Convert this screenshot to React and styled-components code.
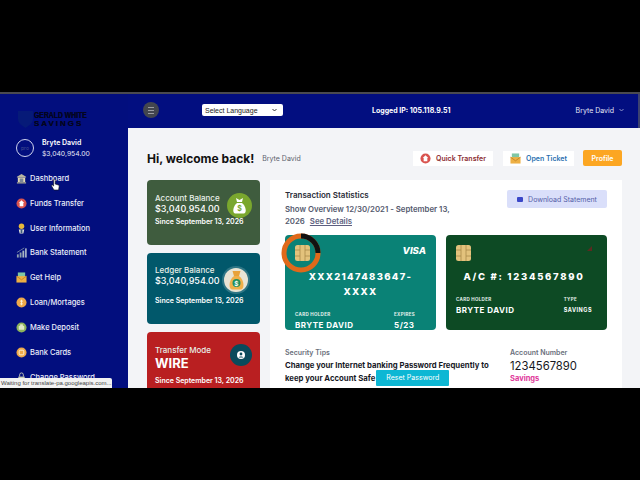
import styled, { createGlobalStyle } from "styled-components";

const GlobalStyle = createGlobalStyle`
  html, body { margin: 0; padding: 0; background: #000; }
  body { font-family: "Inter", "Liberation Sans", sans-serif; }
  * { box-sizing: border-box; }
`;

const BankIcon = () => (
  <svg width="11" height="11" viewBox="0 0 12 12">
    <path d="M6 1 L11 4 V5 H1 V4 Z" fill="#b9b6a0" />
    <rect x="2" y="5" width="8" height="5" fill="#e4d9b4" />
    <rect x="4" y="6" width="4" height="4" fill="#7a8596" />
    <rect x="1" y="10" width="10" height="1.5" fill="#9d9c90" />
  </svg>
);
const TransferIcon = () => (
  <svg width="11" height="11" viewBox="0 0 12 12">
    <circle cx="6" cy="6" r="5.5" fill="#d9534f" />
    <path d="M6 2.5 L9 5.5 H8 V9 H4 V5.5 H3 Z" fill="#fff" />
  </svg>
);
const UserIcon = () => (
  <svg width="11" height="11" viewBox="0 0 12 12">
    <circle cx="6" cy="3.5" r="3" fill="#e9b93a" />
    <path d="M3 7 H9 L8 11.5 H4 Z" fill="#e3e3da" />
    <rect x="5" y="7" width="2" height="4" fill="#3d5a80" />
  </svg>
);
const ChartIcon = () => (
  <svg width="11" height="11" viewBox="0 0 12 12">
    <rect x="1" y="8" width="2" height="3.5" fill="#8fa0ae" />
    <rect x="4" y="6" width="2" height="5.5" fill="#8fa0ae" />
    <rect x="7" y="4" width="2" height="7.5" fill="#a9b7c2" />
    <rect x="10" y="1.5" width="1.6" height="10" fill="#c2ccd4" />
    <path d="M1 6 L5 3.5 L9 1" stroke="#8fa0ae" strokeWidth="0.8" fill="none" />
  </svg>
);
const TicketIcon = ({ size = 11 }) => (
  <svg width={size} height={size} viewBox="0 0 12 12">
    <rect x="2" y="0.5" width="8" height="6" fill="#7fc6a4" />
    <rect x="0.5" y="4.5" width="11" height="7" fill="#eeb044" />
    <path d="M0.5 4.5 L6 8.5 L11.5 4.5" stroke="#b87c1e" strokeWidth="0.8" fill="none" />
  </svg>
);
const CoinIcon = () => (
  <svg width="11" height="11" viewBox="0 0 12 12">
    <circle cx="6" cy="6" r="5.5" fill="#efa94a" />
    <path d="M6 3 V9 M4.5 4.5 H7.5 M4.5 7.5 H7.5" stroke="#fff3d8" strokeWidth="1" />
  </svg>
);
const DepositIcon = () => (
  <svg width="11" height="11" viewBox="0 0 12 12">
    <circle cx="6" cy="6" r="5.5" fill="#8eb35c" />
    <rect x="3" y="4" width="6" height="4.5" rx="1" fill="#dfe8c8" />
    <rect x="4.5" y="2.5" width="3" height="2" fill="#dfe8c8" />
  </svg>
);
const CardIcon = () => (
  <svg width="11" height="11" viewBox="0 0 12 12">
    <circle cx="6" cy="6" r="5.5" fill="#efa94a" />
    <rect x="3.5" y="3.5" width="5" height="5" rx="1" fill="none" stroke="#fff3d8" strokeWidth="1" />
  </svg>
);
const LockIcon = () => (
  <svg width="11" height="11" viewBox="0 0 12 12">
    <rect x="2.5" y="5" width="7" height="6.5" fill="#c9cdb8" />
    <path d="M4 5 V3 a2 2 0 0 1 4 0 V5" stroke="#c9cdb8" fill="none" />
  </svg>
);
const Cursor = () => (
  <svg width="9" height="12" viewBox="0 0 9 12">
    <path d="M2.6 1 a.8 .8 0 0 1 1.6 0 V5 L7.4 6 a1 1 0 0 1 .8 1 L7.6 11 H3 L.6 7 a.7 .7 0 0 1 1.2 -.7 L2.6 7 Z" fill="#fff" stroke="#111" strokeWidth=".6" />
  </svg>
);
const Shield = () => (
  <svg width="15" height="18" viewBox="0 0 15 18">
    <path d="M0 1 H15 V9 C15 14 10 16 7.5 18 C5 16 0 14 0 9 Z" fill="#061a78" />
  </svg>
);
const Chip = ({ width = 15, height = 16 }) => (
  <svg width={width} height={height} viewBox="0 0 15 16">
    <rect width="15" height="16" rx="2.5" fill="#e3c27c" />
    <path d="M5 0 V5 H0 M10 0 V5 H15 M0 11 H5 V16 M15 11 H10 V16 M5 5 V11 M10 5 V11" stroke="#a98a4a" strokeWidth=".8" fill="none" />
  </svg>
);
const MoneyBag = () => (
  <svg width="15" height="16" viewBox="0 0 15 16">
    <path d="M4 0 L7.5 2 L11 0 L10 4 H5 Z" fill="#fff" />
    <path d="M5 5 H10 C14 8 15 15 12 15.5 H3 C0 15 1 8 5 5 Z" fill="#fff" />
    <text x="7.5" y="13" fontSize="7" fontWeight="700" fill="#7aa72e" textAnchor="middle">$</text>
  </svg>
);
const GoldBag = () => (
  <svg width="15" height="19" viewBox="0 0 15 19">
    <path d="M3.5 0 H11.5 L10 5 H5 Z" fill="#e8a23a" />
    <path d="M5 5 H10 C15 8 16 18 12 18.5 H3 C-1 18 0 8 5 5 Z" fill="#efb04a" />
    <circle cx="7.5" cy="12" r="4" fill="#1f8f5f" />
    <text x="7.5" y="14.5" fontSize="6.5" fontWeight="700" fill="#fff" textAnchor="middle">$</text>
  </svg>
);
const PersonBadge = () => (
  <svg width="8" height="8" viewBox="0 0 8 8">
    <circle cx="4" cy="4" r="4" fill="#fff" />
    <circle cx="4" cy="3" r="1.4" fill="#0a4a5c" />
    <path d="M1.5 6.6 C2 5 6 5 6.5 6.6 Z" fill="#0a4a5c" />
  </svg>
);
const Ring = () => (
  <svg width="42" height="42" viewBox="0 0 42 42">
    <circle cx="21" cy="21" r="17" fill="none" stroke="#e0691a" strokeWidth="5" />
    <path d="M21 4 A17 17 0 0 1 38 21" fill="none" stroke="#111" strokeWidth="5" />
  </svg>
);
const Chevron = ({ color }) => (
  <svg width="5" height="4" viewBox="0 0 5 4">
    <path d="M.5 1 L2.5 3 L4.5 1" fill="none" stroke={color} strokeWidth=".9" />
  </svg>
);

const Page = styled.div`
  width: 640px;
  height: 480px;
  padding-top: 92px;
  overflow: hidden;
  background: #000;
`;
const Frame = styled.div`
  position: relative;
  height: 296px;
  display: flex;
  overflow: hidden;
  border-top: 2px solid #4a4a50;
  background: #f3f4f7;
`;
const Sidebar = styled.aside`
  width: 128px;
  flex-shrink: 0;
  background: #020e7e;
  padding-top: 16px;
`;
const Logo = styled.div`
  margin-left: 18px;
  height: 18px;
  display: flex;
  gap: 1px;
`;
const LogoText = styled.div`
  font-family: "Liberation Sans", sans-serif;
  font-weight: 700;
  color: #03051f;
  text-shadow: 0 0 0.6px #03051f;
`;
const LogoTop = styled.div`
  font-size: 9.5px;
  line-height: 9px;
  transform: scaleX(0.72);
  transform-origin: left;
  white-space: nowrap;
`;
const LogoBottom = styled.div`
  font-size: 8px;
  line-height: 9px;
  letter-spacing: 2px;
  white-space: nowrap;
`;
const Profile = styled.div`
  display: flex;
  align-items: center;
  gap: 8px;
  margin: 9px 0 0 16px;
`;
const Avatar = styled.div`
  width: 18px;
  height: 18px;
  border-radius: 50%;
  border: 1px solid #cfd3ee;
  color: #46508f;
  font-size: 5px;
  display: flex;
  align-items: center;
  justify-content: center;
`;
const ProfileName = styled.div`
  color: #fff;
  font-size: 7px;
  font-weight: 600;
  line-height: 11px;
`;
const ProfileAmount = styled.div`
  color: #e6e8f6;
  font-size: 6.8px;
  line-height: 11px;
`;
const Menu = styled.nav`
  margin-top: 7px;
  display: flex;
  flex-direction: column;
`;
const MenuItem = styled.div`
  position: relative;
  height: 24.85px;
  display: flex;
  align-items: center;
  gap: 3px;
  padding-left: 16px;
  color: #eceefa;
  font-size: 7.5px;
  font-weight: 500;
  white-space: nowrap;
`;
const Pointer = styled.span`
  position: absolute;
  left: 51px;
  top: 13px;
  line-height: 0;
`;
const Right = styled.div`
  flex: 1;
  min-width: 0;
  display: flex;
  flex-direction: column;
`;
const Topbar = styled.header`
  height: 34px;
  flex-shrink: 0;
  background: #020e80;
  border-right: 2px solid #3c4270;
  display: flex;
  align-items: center;
  padding: 0 0 2px 15px;
  color: #fff;
  font-size: 7px;
`;
const Burger = styled.div`
  width: 16px;
  height: 16px;
  border-radius: 50%;
  background: #43464f;
  display: flex;
  align-items: center;
  justify-content: center;
  &::after {
    content: "";
    width: 6px;
    height: 5px;
    border-top: 1px solid #9a9ca2;
    border-bottom: 1px solid #9a9ca2;
    background: linear-gradient(#9a9ca2, #9a9ca2) center / 100% 1px no-repeat;
  }
`;
const LangSelect = styled.div`
  width: 81px;
  height: 12px;
  margin-left: 43px;
  background: #fff;
  border-radius: 2px;
  color: #222;
  font-size: 7px;
  padding: 0 6px 0 3px;
  display: flex;
  align-items: center;
  justify-content: space-between;
  font-family: "Liberation Sans", sans-serif;
`;
const LoggedIp = styled.div`
  margin-left: 89px;
  font-weight: 700;
  font-size: 7px;
  white-space: nowrap;
`;
const TopUser = styled.div`
  margin-left: auto;
  padding-right: 14px;
  display: flex;
  align-items: center;
  gap: 5px;
  color: #e4e6f6;
  font-size: 7px;
  white-space: nowrap;
`;
const Content = styled.main`
  flex: 1;
  padding: 22px 18px 0 19px;
  min-height: 0;
`;
const Header = styled.div`
  display: flex;
  align-items: center;
  height: 16px;
`;
const Welcome = styled.h1`
  margin: 0;
  font-size: 12px;
  font-weight: 700;
  color: #111;
  white-space: nowrap;
`;
const Sub = styled.span`
  margin-left: 8px;
  font-size: 7px;
  color: #5b5f6b;
`;
const Actions = styled.div`
  margin-left: auto;
  display: flex;
  align-items: center;
  gap: 10px;
`;
const ActionLink = styled.div`
  height: 15px;
  width: ${(p) => p.$width}px;
  background: #fff;
  display: flex;
  align-items: center;
  justify-content: center;
  gap: 5px;
  color: ${(p) => p.$color};
  font-size: 7px;
  font-weight: 600;
  white-space: nowrap;
`;
const ProfileButton = styled.div`
  width: 39px;
  height: 16px;
  margin-left: -1px;
  border-radius: 2px;
  background: #fca622;
  color: #fff;
  font-size: 7px;
  font-weight: 600;
  display: flex;
  align-items: center;
  justify-content: center;
`;
const Columns = styled.div`
  margin-top: 14px;
  display: flex;
  gap: 10px;
  align-items: flex-start;
`;
const StatColumn = styled.div`
  width: 113px;
  flex-shrink: 0;
  display: flex;
  flex-direction: column;
  gap: 8px;
`;
const StatCard = styled.div`
  height: ${(p) => p.$height}px;
  border-radius: 4px;
  background: ${(p) => p.$bg};
  color: #fff;
  padding: 0 8px ${(p) => p.$pb}px;
  position: relative;
  display: flex;
  flex-direction: column;
  justify-content: center;
`;
const StatLabel = styled.div`
  font-size: 8px;
  font-weight: 500;
  line-height: 10px;
  color: #e8efe8;
`;
const StatValue = styled.div`
  font-size: ${(p) => p.$size}px;
  font-weight: ${(p) => p.$weight};
  line-height: ${(p) => p.$line}px;
`;
const StatSince = styled.div`
  font-size: 7px;
  font-weight: 600;
  margin-top: ${(p) => p.$gap}px;
  white-space: nowrap;
`;
const StatIcon = styled.div`
  position: absolute;
  right: ${(p) => p.$right}px;
  top: ${(p) => p.$top}px;
  width: ${(p) => p.$size}px;
  height: ${(p) => p.$size}px;
  border-radius: 50%;
  background: ${(p) => p.$bg};
  box-shadow: ${(p) => (p.$halo ? "0 0 0 2px rgba(255,255,255,.18)" : "none")};
  display: flex;
  align-items: center;
  justify-content: center;
`;
const Panel = styled.section`
  flex: 1;
  min-width: 0;
  height: 220px;
  background: #fff;
  padding: 10px 15px 0;
`;
const PanelHead = styled.div`
  display: flex;
  justify-content: space-between;
  align-items: flex-start;
`;
const PanelTitle = styled.div`
  font-size: 8px;
  font-weight: 600;
  color: #2a2d38;
  line-height: 11px;
`;
const Overview = styled.div`
  margin-top: 3px;
  font-size: 7.8px;
  font-weight: 600;
  color: #555a6e;
  line-height: 11.5px;
  white-space: nowrap;
`;
const OverviewLine = styled.div`
  display: flex;
  gap: 5px;
`;
const SeeDetails = styled.span`
  text-decoration: underline;
  color: #5d5f80;
`;
const DownloadButton = styled.div`
  width: 100px;
  height: 18px;
  background: #dadffa;
  border-radius: 2px;
  display: flex;
  align-items: center;
  justify-content: center;
  gap: 5px;
  font-size: 7px;
  color: #5560a8;
  white-space: nowrap;
`;
const MailIcon = styled.span`
  width: 6px;
  height: 5px;
  background: #3a47c8;
  border-radius: 1px;
`;
const Cards = styled.div`
  margin-top: 8px;
  display: flex;
  gap: 10px;
`;
const BankCard = styled.div`
  position: relative;
  width: ${(p) => p.$width}px;
  height: 95px;
  border-radius: 4px;
  background: ${(p) => p.$bg};
  color: #fff;
  padding: 10px ${(p) => p.$right}px 0 10px;
  display: flex;
  flex-direction: column;
`;
const RingSlot = styled.span`
  position: absolute;
  left: -5px;
  top: -3px;
  line-height: 0;
`;
const ChipRow = styled.div`
  display: flex;
  justify-content: space-between;
  align-items: flex-start;
  height: 16px;
  line-height: 0;
`;
const Visa = styled.div`
  font-size: 9.5px;
  line-height: 12px;
  font-weight: 800;
  font-style: italic;
`;
const Dot = styled.span`
  width: 5px;
  height: 5px;
  margin-top: 1px;
  background: #5a2a20;
  clip-path: polygon(100% 0, 100% 100%, 0 100%);
`;
const CardNumber = styled.div`
  margin-top: 8px;
  text-align: center;
  font-size: 9.5px;
  font-weight: 800;
  letter-spacing: ${(p) => p.$spacing}px;
  line-height: 15px;
  white-space: nowrap;
`;
const CardFoot = styled.div`
  margin-top: auto;
  padding-bottom: ${(p) => p.$bottom}px;
  display: flex;
  justify-content: space-between;
`;
const FootColumn = styled.div`
  margin-right: ${(p) => p.$right || 0}px;
`;
const FootLabel = styled.div`
  font-size: 4.5px;
  font-weight: 700;
  letter-spacing: 0.3px;
  line-height: 10px;
  color: #e5f0ec;
`;
const FootValue = styled.div`
  font-size: ${(p) => p.$size}px;
  font-weight: 700;
  letter-spacing: 0.5px;
  line-height: 10px;
  white-space: nowrap;
`;
const Bottom = styled.div`
  margin-top: 18px;
  display: flex;
  justify-content: space-between;
`;
const TipsLabel = styled.div`
  font-size: 7px;
  font-weight: 600;
  color: #6b6f7c;
  line-height: 10px;
`;
const TipsText = styled.div`
  margin-top: 1px;
  font-size: 7.75px;
  font-weight: 700;
  line-height: 12.5px;
  color: #16181f;
  white-space: nowrap;
`;
const TipsLine = styled.div`
  display: flex;
  align-items: center;
  height: 12.5px;
  gap: 1px;
`;
const ResetButton = styled.span`
  width: 73px;
  height: 16px;
  line-height: 16px;
  background: #0db7d4;
  border-radius: 1px;
  color: #fff;
  text-align: center;
  font-size: 7px;
  font-weight: 400;
`;
const AccountBox = styled.div`
  width: 97px;
`;
const AccountNumber = styled.div`
  font-size: 11.3px;
  color: #15171d;
  line-height: 15px;
  margin-top: 1px;
`;
const Savings = styled.div`
  font-size: 7.5px;
  font-weight: 700;
  color: #e0389a;
  line-height: 10px;
`;
const StatusBar = styled.div`
  position: absolute;
  left: 0;
  bottom: 0;
  width: 112px;
  height: 10px;
  background: #f2f2f2;
  border-top-right-radius: 2px;
  color: #444;
  font-family: "Liberation Sans", sans-serif;
  font-size: 6px;
  line-height: 10px;
  padding-left: 1px;
  white-space: nowrap;
`;

const items = [
  [BankIcon, "Dashboard"],
  [TransferIcon, "Funds Transfer"],
  [UserIcon, "User Information"],
  [ChartIcon, "Bank Statement"],
  [TicketIcon, "Get Help"],
  [CoinIcon, "Loan/Mortages"],
  [DepositIcon, "Make Deposit"],
  [CardIcon, "Bank Cards"],
  [LockIcon, "Change Password"],
];

export default function App() {
  return (
    <Page>
      <GlobalStyle />
      <Frame>
        <Sidebar>
          <Logo>
            <Shield />
            <LogoText>
              <LogoTop>GERALD WHITE</LogoTop>
              <LogoBottom>SAVINGS</LogoBottom>
            </LogoText>
          </Logo>
          <Profile>
            <Avatar>pro</Avatar>
            <div>
              <ProfileName>Bryte David</ProfileName>
              <ProfileAmount>$3,040,954.00</ProfileAmount>
            </div>
          </Profile>
          <Menu>
            {items.map(([Icon, label], i) => (
              <MenuItem key={label}>
                <Icon />
                {label}
                {i === 0 && (
                  <Pointer>
                    <Cursor />
                  </Pointer>
                )}
              </MenuItem>
            ))}
          </Menu>
        </Sidebar>
        <Right>
          <Topbar>
            <Burger />
            <LangSelect>
              Select Language
              <Chevron color="#222" />
            </LangSelect>
            <LoggedIp>Logged IP: 105.118.9.51</LoggedIp>
            <TopUser>
              Bryte David <Chevron color="#9aa0d0" />
            </TopUser>
          </Topbar>
          <Content>
            <Header>
              <Welcome>Hi, welcome back!</Welcome>
              <Sub>Bryte David</Sub>
              <Actions>
                <ActionLink $width={80} $color="#8a2a30">
                  <TransferIcon />
                  Quick Transfer
                </ActionLink>
                <ActionLink $width={71} $color="#2a6fb0">
                  <TicketIcon />
                  Open Ticket
                </ActionLink>
                <ProfileButton>Profile</ProfileButton>
              </Actions>
            </Header>
            <Columns>
              <StatColumn>
                <StatCard $height={65} $pb={7} $bg="#3f5c3e">
                  <StatLabel>Account Balance</StatLabel>
                  <StatValue $size={9} $weight={500} $line={11}>$3,040,954.00</StatValue>
                  <StatSince $gap={3}>Since September 13, 2026</StatSince>
                  <StatIcon $right={8} $top={13} $size={25} $bg="#7aa72e">
                    <MoneyBag />
                  </StatIcon>
                </StatCard>
                <StatCard $height={71} $pb={8} $bg="#01586b">
                  <StatLabel>Ledger Balance</StatLabel>
                  <StatValue $size={9} $weight={500} $line={11}>$3,040,954.00</StatValue>
                  <StatSince $gap={10}>Since September 13, 2026</StatSince>
                  <StatIcon $halo $right={12} $top={15} $size={24} $bg="#e8e4d4">
                    <GoldBag />
                  </StatIcon>
                </StatCard>
                <StatCard $height={71} $pb={6} $bg="#b91f21">
                  <StatLabel>Transfer Mode</StatLabel>
                  <StatValue $size={13} $weight={700} $line={17}>WIRE</StatValue>
                  <StatSince $gap={4}>Since September 13, 2026</StatSince>
                  <StatIcon $right={8} $top={12} $size={22} $bg="#0a4a5c">
                    <PersonBadge />
                  </StatIcon>
                </StatCard>
              </StatColumn>
              <Panel>
                <PanelHead>
                  <div>
                    <PanelTitle>Transaction Statistics</PanelTitle>
                    <Overview>
                      <OverviewLine>Show Overview 12/30/2021 - September 13,</OverviewLine>
                      <OverviewLine>
                        <span>2026</span>
                        <SeeDetails>See Details</SeeDetails>
                      </OverviewLine>
                    </Overview>
                  </div>
                  <DownloadButton>
                    <MailIcon />
                    Download Statement
                  </DownloadButton>
                </PanelHead>
                <Cards>
                  <BankCard $width={151} $right={10} $bg="#0a8276">
                    <RingSlot>
                      <Ring />
                    </RingSlot>
                    <ChipRow>
                      <Chip />
                      <Visa>VISA</Visa>
                    </ChipRow>
                    <CardNumber $spacing={1.3}>
                      XXX2147483647-
                      <br />
                      XXXX
                    </CardNumber>
                    <CardFoot $bottom={0}>
                      <FootColumn>
                        <FootLabel>CARD HOLDER</FootLabel>
                        <FootValue $size={8}>BRYTE DAVID</FootValue>
                      </FootColumn>
                      <FootColumn $right={11}>
                        <FootLabel>EXPIRES</FootLabel>
                        <FootValue $size={8}>5/23</FootValue>
                      </FootColumn>
                    </CardFoot>
                  </BankCard>
                  <BankCard $width={161} $right={15} $bg="#0d4a24">
                    <ChipRow>
                      <Chip />
                      <Dot />
                    </ChipRow>
                    <CardNumber $spacing={1.7}>A/C #: 1234567890</CardNumber>
                    <CardFoot $bottom={15}>
                      <FootColumn>
                        <FootLabel>CARD HOLDER</FootLabel>
                        <FootValue $size={8}>BRYTE DAVID</FootValue>
                      </FootColumn>
                      <FootColumn>
                        <FootLabel>TYPE</FootLabel>
                        <FootValue $size={5.5}>SAVINGS</FootValue>
                      </FootColumn>
                    </CardFoot>
                  </BankCard>
                </Cards>
                <Bottom>
                  <div>
                    <TipsLabel>Security Tips</TipsLabel>
                    <TipsText>
                      <TipsLine>Change your Internet banking Password Frequently to</TipsLine>
                      <TipsLine>
                        <span>keep your Account Safe</span>
                        <ResetButton>Reset Password</ResetButton>
                      </TipsLine>
                    </TipsText>
                  </div>
                  <AccountBox>
                    <TipsLabel>Account Number</TipsLabel>
                    <AccountNumber>1234567890</AccountNumber>
                    <Savings>Savings</Savings>
                  </AccountBox>
                </Bottom>
              </Panel>
            </Columns>
          </Content>
        </Right>
        <StatusBar>Waiting for translate-pa.googleapis.com...</StatusBar>
      </Frame>
    </Page>
  );
}
